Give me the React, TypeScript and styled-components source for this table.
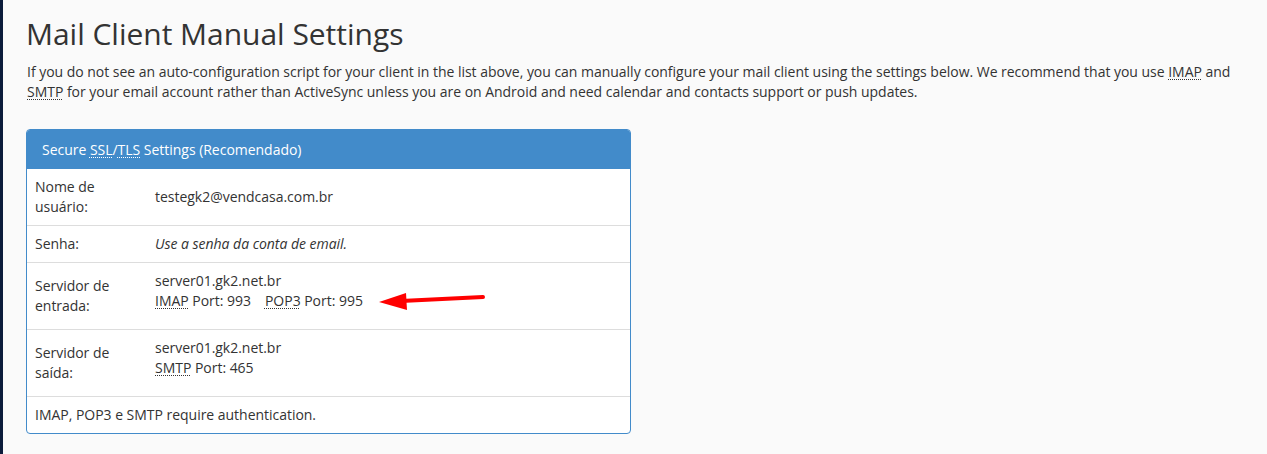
import styled, { createGlobalStyle } from 'styled-components'

const GlobalStyle = createGlobalStyle`
  html, body {
    margin: 0;
    padding: 0;
    background: #fafafa;
  }
  body {
    font-family: 'Open Sans', 'Liberation Sans', sans-serif;
    font-size: 14px;
    line-height: 20px;
    letter-spacing: -0.025px;
    color: #333;
  }
`

const Page = styled.div`
  display: flex;
  min-height: 454px;
`

const Strip = styled.div`
  width: 3px;
  flex-shrink: 0;
  background: #0c1c3b;
`

const Main = styled.main`
  flex: 1;
  padding: 0 24px;
`

const Title = styled.h1`
  margin: 17px 0 12px -1px;
  font-size: 30px;
  line-height: 33px;
  font-weight: 400;
  color: #333;
`

const Intro = styled.p`
  margin: 0 0 27px;
`

const Abbr = styled.abbr`
  text-decoration: underline dotted;
  text-underline-offset: 2px;
  text-decoration-thickness: 1px;
  cursor: help;
`

const Panel = styled.section`
  position: relative;
  width: 603px;
  margin-left: -1px;
  border: 1px solid #428bca;
  border-radius: 4px;
  background: #fff;
`

const PanelHeader = styled.div`
  background: #428bca;
  color: #fff;
  padding: 10px 15px 9px;
  border-radius: 3px 3px 0 0;
`

const Row = styled.div<{ $first?: boolean }>`
  display: grid;
  grid-template-columns: 120px 1fr;
  border-top: ${p => (p.$first ? 'none' : '1px solid #ddd')};
`

const Label = styled.div`
  padding: 8px;
  align-self: center;
`

const Value = styled.div<{ $tall?: boolean; $italic?: boolean }>`
  padding: ${p => (p.$tall ? '8px 8px 18px' : '8px')};
  align-self: ${p => (p.$tall ? 'start' : 'center')};
  font-style: ${p => (p.$italic ? 'italic' : 'normal')};
`

const Ports = styled.div`
  display: flex;
  gap: 14px;
`

const Note = styled.div`
  padding: 8px;
  border-top: 1px solid #ddd;
`

const Arrow = styled.svg`
  position: absolute;
  left: 324px;
  top: 158px;
`

export default function App() {
  return (
    <>
      <GlobalStyle />
      <Page>
        <Strip />
        <Main>
          <Title>Mail Client Manual Settings</Title>
          <Intro>
            If you do not see an auto-configuration script for your client in the list above, you can
            manually configure your mail client using the settings below. We recommend that you use{' '}
            <Abbr title="Internet Message Access Protocol">IMAP</Abbr> and{' '}
            <Abbr title="Simple Mail Transfer Protocol">SMTP</Abbr> for your email account rather than
            ActiveSync unless you are on Android and need calendar and contacts support or push updates.
          </Intro>
          <Panel>
            <PanelHeader>
              Secure <Abbr title="Secure Sockets Layer">SSL</Abbr>/
              <Abbr title="Transport Layer Security">TLS</Abbr> Settings (Recomendado)
            </PanelHeader>
            <Row $first>
              <Label>Nome de usuário:</Label>
              <Value>testegk2@vendcasa.com.br</Value>
            </Row>
            <Row>
              <Label>Senha:</Label>
              <Value $italic>Use a senha da conta de email.</Value>
            </Row>
            <Row>
              <Label>Servidor de entrada:</Label>
              <Value $tall>
                <div>server01.gk2.net.br</div>
                <Ports>
                  <span>
                    <Abbr title="Internet Message Access Protocol">IMAP</Abbr> Port: 993
                  </span>
                  <span>
                    <Abbr title="Post Office Protocol 3">POP3</Abbr> Port: 995
                  </span>
                </Ports>
              </Value>
            </Row>
            <Row>
              <Label>Servidor de saída:</Label>
              <Value $tall>
                <div>server01.gk2.net.br</div>
                <div>
                  <Abbr title="Simple Mail Transfer Protocol">SMTP</Abbr> Port: 465
                </div>
              </Value>
            </Row>
            <Note>IMAP, POP3 e SMTP require authentication.</Note>
            <Arrow width="140" height="24" viewBox="0 0 140 24">
              <path d="M40 13.5 L132 9" stroke="#ff0000" strokeWidth="4" strokeLinecap="round" fill="none" />
              <path d="M28 14 L55 5 L56 22 Z" fill="#ff0000" />
            </Arrow>
          </Panel>
        </Main>
      </Page>
    </>
  )
}
